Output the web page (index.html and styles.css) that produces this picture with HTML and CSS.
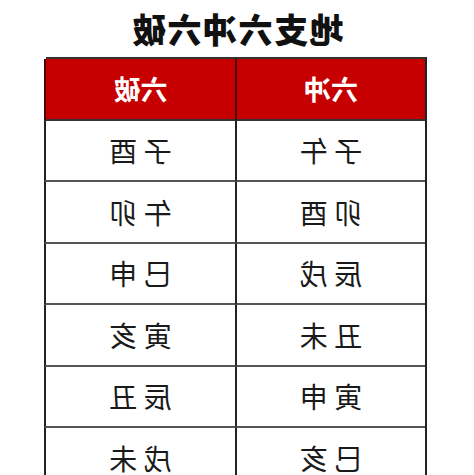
FILE: index.html
```html
<!DOCTYPE html>
<html lang="zh">
<head>
<meta charset="utf-8">
<link rel="stylesheet" href="styles.css">
</head>
<body>
<div class="page">
  <h1 class="title">地支六冲六破</h1>
  <div class="table">
    <div class="cell head">六冲</div>
    <div class="cell head">六破</div>
    <div class="cell">子 午</div>
    <div class="cell">子 酉</div>
    <div class="cell">卯 酉</div>
    <div class="cell">午 卯</div>
    <div class="cell">辰 戌</div>
    <div class="cell">巳 申</div>
    <div class="cell">丑 未</div>
    <div class="cell">寅 亥</div>
    <div class="cell">寅 申</div>
    <div class="cell">辰 丑</div>
    <div class="cell">巳 亥</div>
    <div class="cell">戌 未</div>
  </div>
</div>
</body>
</html>
```
FILE: styles.css
```css
html, body {
  margin: 0;
  padding: 0;
  background: #fff;
}
.page {
  width: 474px;
  height: 475px;
  overflow: hidden;
  transform: scaleX(-1);
  font-family: "Noto Sans CJK SC", "Noto Sans", sans-serif;
  background: #fff;
}
.title {
  margin: 0;
  height: 57px;
  display: flex;
  align-items: center;
  justify-content: center;
  font-size: 34px;
  font-weight: 900;
  letter-spacing: 1.5px;
  color: #111;
  line-height: 1;
}
.table {
  margin-left: 47px;
  width: 381px;
  display: grid;
  grid-template-columns: 190px 191px;
  grid-auto-rows: 61.5px;
  border-left: 2px solid #222;
  border-top: 2px solid #333;
  box-sizing: border-box;
}
.cell {
  display: flex;
  align-items: center;
  justify-content: center;
  border-right: 2px solid #222;
  border-bottom: 2px solid #555;
  font-size: 28px;
  color: #1a1a1a;
  line-height: 1;
}
.head {
  background: #c60000;
  color: #fff;
  font-weight: 700;
  font-size: 27px;
  border-right-color: #4a0000;
  border-bottom-color: #333;
}
```
